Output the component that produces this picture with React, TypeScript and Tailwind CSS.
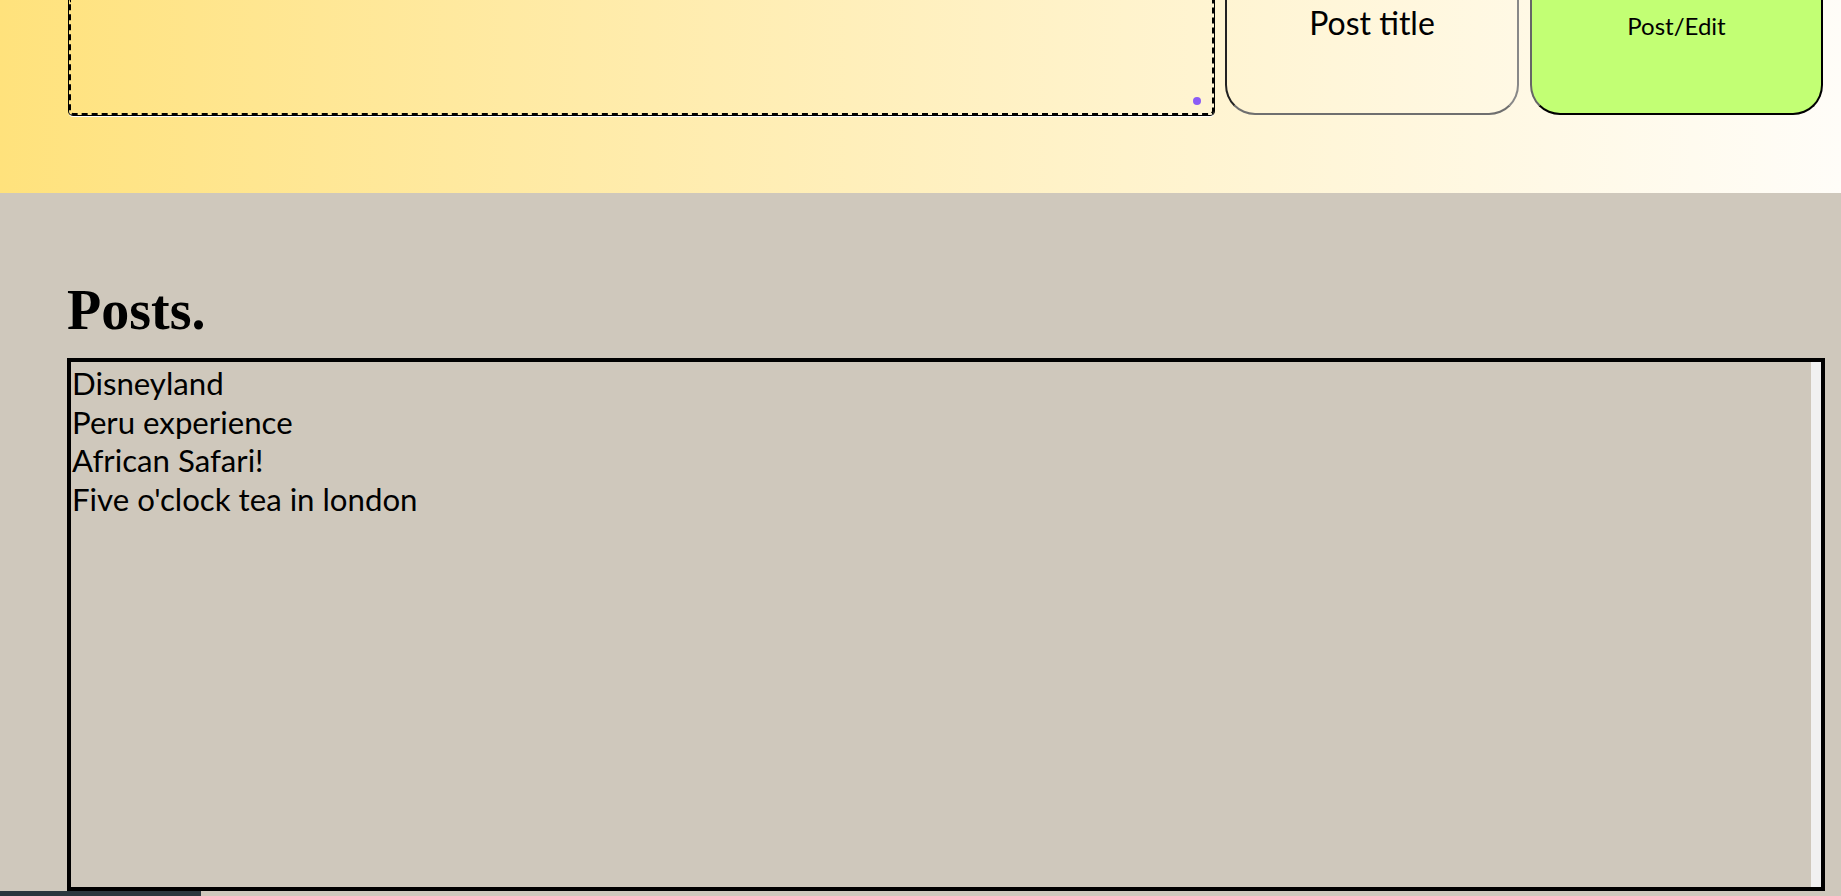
import React from 'react';

// posts shown in the list box
const posts = [
  'Disneyland',
  'Peru experience',
  'African Safari!',
  "Five o'clock tea in london",
];

export default function App() {
  return (
    <div className="h-[896px] overflow-hidden bg-[#cfc8bc] font-['Lato','Liberation_Sans',sans-serif] text-black">
      {/* top editor strip (page is scrolled, so only the bottom part shows) */}
      <header className="h-[193px] bg-gradient-to-r from-[#ffe27c] via-[#fff0bf] to-[#fffdf8] pl-[69px] pr-[18px]">
        <div className="flex gap-[11px]">
          <div className="relative h-[115px] flex-1 rounded-b-[4px] border-2 border-t-0 border-dashed border-black shadow-[0_0_0_1px_#000,0_2px_0_0_#ffffff]">
            <span className="absolute right-[11px] bottom-[8px] h-[8px] w-[8px] rounded-full bg-[#8b5cf6]" />
          </div>
          <div className="h-[115px] w-[294px] rounded-b-[30px] border-2 border-t-0 border-l-[#222] border-r-[#888] border-b-[#6f6f6f] pt-[4px] text-center text-[32px] leading-[38px]">
            Post title
          </div>
          <div className="h-[115px] w-[293px] rounded-b-[30px] border-2 border-t-0 border-l-[#666] border-r-black border-b-black bg-[#c2ff74] pt-[11px] text-center text-[24px] leading-[29px]">
            Post/Edit
          </div>
        </div>
      </header>

      <main className="pl-[67px] pr-[16px] pt-[89px]">
        <h1 className="mb-[20px] font-['Liberation_Serif',serif] text-[56px] font-bold leading-[56px]">
          Posts.
        </h1>
        <div className="flex h-[533px] border-4 border-black">
          <ul className="flex-1 pl-[1px] pt-[2px] text-[31.2px] leading-[38.7px]">
            {posts.map((p) => (
              <li key={p}>{p}</li>
            ))}
          </ul>
          <div className="w-[10px] bg-[#f1f1f1]" />
        </div>
      </main>
      <div className="h-[6px] w-[201px] bg-[#2b373e]" />
    </div>
  );
}
